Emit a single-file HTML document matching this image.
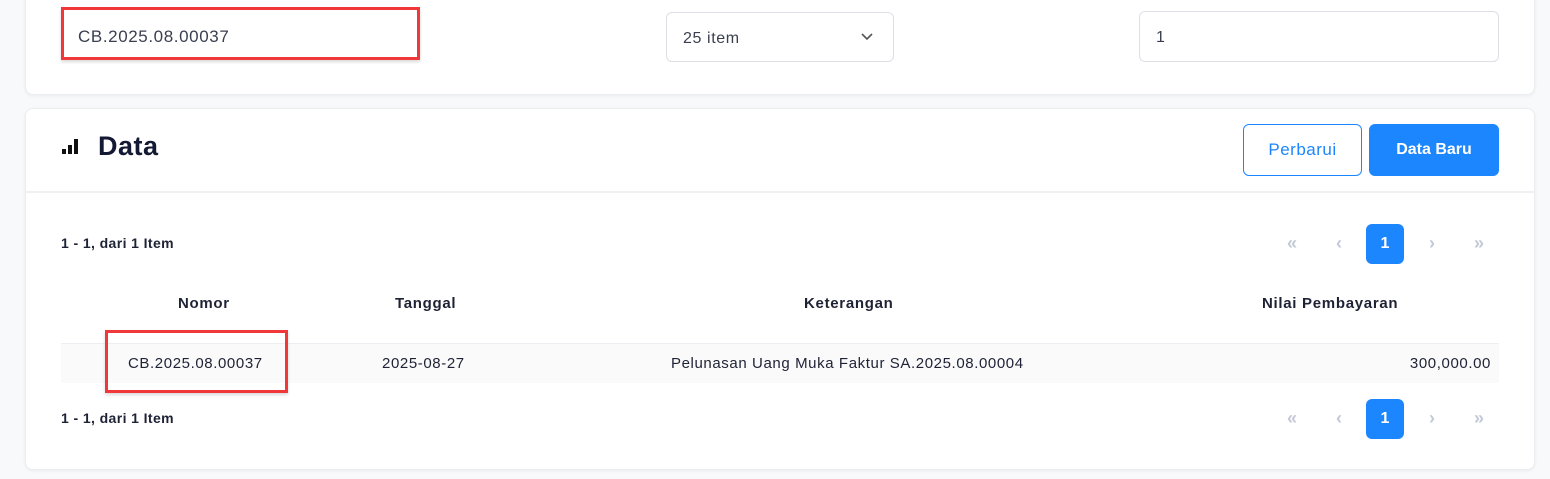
<!DOCTYPE html>
<html><head><meta charset="utf-8"><style>
*{box-sizing:border-box;margin:0;padding:0}
body{width:1550px;height:479px;background:#f8f9fa;font-family:"Liberation Sans",sans-serif;color:#1e2235;position:relative;overflow:hidden}
.card{position:absolute;left:25px;width:1510px;background:#fff;border:1px solid #ebedf0;border-radius:8px;box-shadow:0 1px 3px rgba(0,0,0,.06)}
.abs{position:absolute}
.inp{position:absolute;border:1px solid #dcdfe4;border-radius:6px;background:#fff;font-size:16px;letter-spacing:.6px;color:#3a3f50;padding-left:16px;padding-top:3px;display:flex;align-items:center}
.red{position:absolute;border:3px solid #f0383a;box-shadow:0 2px 3px rgba(0,0,0,.15)}
.t{position:absolute;font-size:15px;letter-spacing:.6px;white-space:nowrap}
.b{font-weight:bold}
.lb{font-size:14px;letter-spacing:.4px}
.h{font-size:15px;letter-spacing:.7px}
.pg{position:absolute;font-size:18px;color:#c3c9d6;width:38px;height:38px;display:flex;align-items:center;justify-content:center;font-weight:bold}
.pg.on{background:#1c86ff;color:#fff;border-radius:6px;font-size:16px}
</style></head><body>
<div class="card" style="top:-10px;height:105px"></div>
<div class="inp" style="left:62px;top:9px;width:356px;height:50px;border:none;font-size:17px;padding-top:5px">CB.2025.08.00037</div>
<div class="red" style="left:61px;top:7px;width:359px;height:53px"></div>
<div class="inp" style="left:666px;top:12px;width:228px;height:50px">25 item
<svg class="abs" style="left:193px;top:19px" width="14" height="10" viewBox="0 0 14 10"><path d="M2 2l5 5 5-5" fill="none" stroke="#555" stroke-width="1.6"/></svg></div>
<div class="inp" style="left:1139px;top:11px;width:360px;height:51px">1</div>

<div class="card" style="top:108px;height:362px"></div>
<div class="abs" style="left:26px;top:191px;width:1508px;height:2px;background:#eef0f2"></div>
<svg class="abs" style="left:61px;top:138px" width="20" height="18"><rect x="1" y="11" width="4" height="5" fill="#111"/><rect x="7" y="7" width="4" height="9" fill="#111"/><rect x="13" y="1" width="4" height="15" fill="#111"/></svg>
<div class="t b" style="left:98px;top:131px;font-size:27px;letter-spacing:.5px;color:#141a33">Data</div>
<div class="abs" style="left:1243px;top:124px;width:119px;height:52px;border:1px solid #1c86ff;border-radius:6px;color:#1c86ff;font-size:17px;letter-spacing:.5px;display:flex;align-items:center;justify-content:center">Perbarui</div>
<div class="abs" style="left:1369px;top:124px;width:130px;height:52px;background:#1c86ff;border-radius:6px;color:#fff;font-size:16px;font-weight:bold;display:flex;align-items:center;justify-content:center">Data Baru</div>

<div class="t b lb" style="left:61px;top:235px">1 - 1, dari 1 Item</div>
<div class="pg" style="left:1273px;top:224px">«</div>
<div class="pg" style="left:1320px;top:224px">‹</div>
<div class="pg on" style="left:1366px;top:224px;height:40px">1</div>
<div class="pg" style="left:1413px;top:224px">›</div>
<div class="pg" style="left:1460px;top:224px">»</div>

<div class="t b h" style="left:178px;top:295px">Nomor</div>
<div class="t b h" style="left:395px;top:295px">Tanggal</div>
<div class="t b h" style="left:804px;top:295px">Keterangan</div>
<div class="t b h" style="left:1262px;top:295px">Nilai Pembayaran</div>
<div class="abs" style="left:61px;top:343px;width:1438px;height:40px;background:#fafafa;border-top:1px solid #eceef1"></div>
<div class="t" style="left:128px;top:355px">CB.2025.08.00037</div>
<div class="t" style="left:382px;top:355px">2025-08-27</div>
<div class="t" style="left:671px;top:355px">Pelunasan Uang Muka Faktur SA.2025.08.00004</div>
<div class="t" style="right:59px;top:355px">300,000.00</div>
<div class="red" style="left:105px;top:330px;width:183px;height:63px"></div>

<div class="t b lb" style="left:61px;top:410px">1 - 1, dari 1 Item</div>
<div class="pg" style="left:1273px;top:399px">«</div>
<div class="pg" style="left:1320px;top:399px">‹</div>
<div class="pg on" style="left:1366px;top:399px;height:40px">1</div>
<div class="pg" style="left:1413px;top:399px">›</div>
<div class="pg" style="left:1460px;top:399px">»</div>
</body></html>
